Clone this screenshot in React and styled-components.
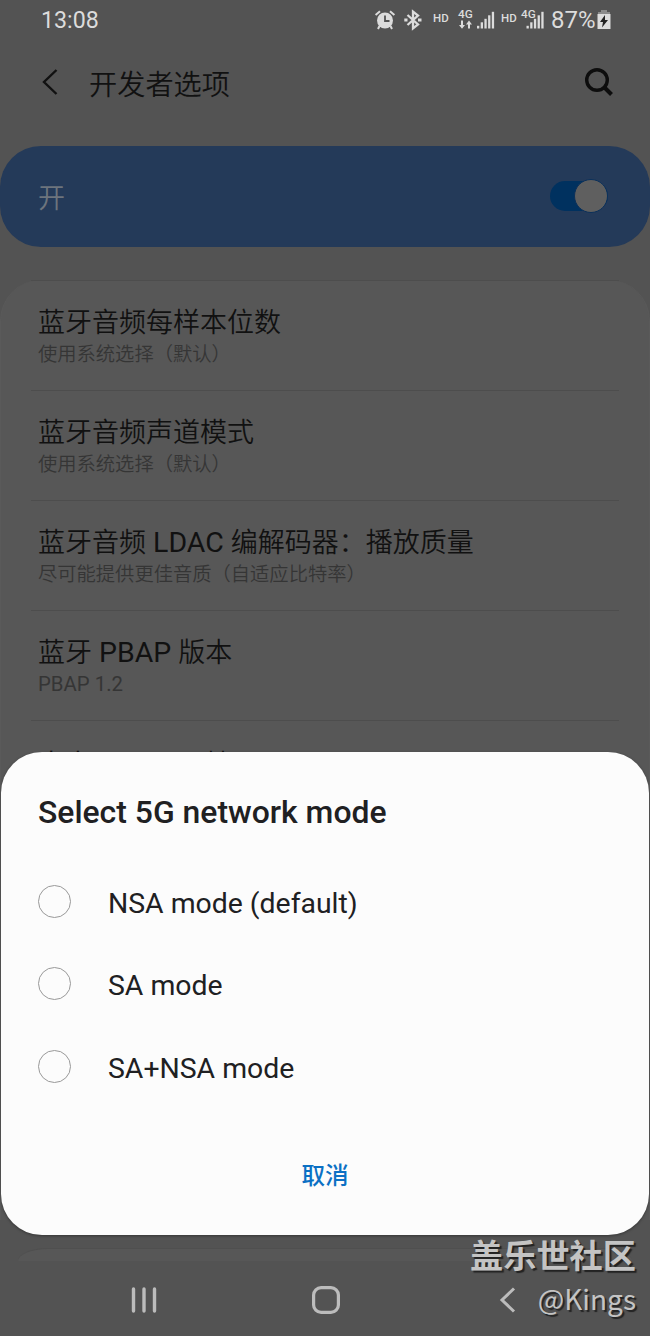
import React from 'react';
import styled, { createGlobalStyle } from 'styled-components';

const Global = createGlobalStyle`
  * { box-sizing: border-box; }
  body { margin: 0; background: #535353; }
`;

const Screen = styled.div`
  position: relative;
  display: flex;
  flex-direction: column;
  width: 650px;
  height: 1336px;
  overflow: hidden;
  background: #535353;
  font-family: Roboto, 'Noto Sans CJK SC', sans-serif;
  color: #111;
`;

const StatusBar = styled.div`
  display: flex;
  flex: none;
  align-items: center;
  justify-content: space-between;
  height: 40px;
  padding: 0 39px 0 41px;
  color: #dcdcdc;
`;

const Clock = styled.span`
  font-size: 23.2px;
  line-height: 40px;
`;

const Indicators = styled.div`
  display: flex;
  align-items: center;
  height: 38px;
  padding-bottom: 1px;
`;

const Battery = styled.span`
  width: 46px;
  margin-left: 5px;
  font-size: 24px;
  line-height: 40px;
  white-space: nowrap;
`;

const HdTag = styled.span`
  width: 17px;
  margin-left: ${p => p.$gap}px;
  font-size: 11.5px;
  font-weight: 500;
  line-height: 36px;
  padding-bottom: 3px;
`;

const Icon = styled.svg`
  flex: none;
  display: block;
  overflow: visible;
  margin-left: ${p => p.$gap || 0}px;
`;

const Header = styled.header`
  display: flex;
  flex: none;
  align-items: center;
  height: 106px;
  padding: 0 36px 22px 40px;
`;

const HeaderTitle = styled.h1`
  flex: 1;
  margin: 0 0 0 29px;
  padding-top: 8px;
  font-size: 28.2px;
  line-height: 40px;
  font-weight: 350;
`;

const MasterSwitch = styled.div`
  display: flex;
  flex: none;
  align-items: center;
  justify-content: space-between;
  height: 101px;
  padding: 0 42px 1px 38px;
  border-radius: 41px;
  background: #243a59;
  color: #6d747d;
  font-size: 27px;
  font-weight: 350;
`;

const Track = styled.div`
  display: flex;
  align-items: center;
  justify-content: flex-end;
  width: 58px;
  height: 30px;
  border-radius: 15px;
  background: #00315f;
`;

const Thumb = styled.div`
  flex: none;
  width: 34px;
  height: 34px;
  border: 1px solid #0b305a;
  border-radius: 50%;
  background: #5f5f5f;
`;

const List = styled.div`
  flex: none;
  height: 940px;
  margin: 33px 0 28px;
  border-radius: 41px 41px 0 0;
  background: #575757;
  border-left: 1px solid #5a5a5a;
  border-right: 1px solid #5a5a5a;
  padding: 0 30px;
`;

const Row = styled.div`
  height: 110px;
  padding: 24px 0 0 7px;
  border-top: 1px solid #4d4d4d;

  &:last-child {
    padding-top: 26px;
  }
`;

const RowTitle = styled.div`
  height: 37px;
  font-size: 27px;
  line-height: 36px;
  font-weight: 350;
  white-space: nowrap;
`;

const RowNote = styled.div`
  height: 26px;
  font-size: 19.3px;
  line-height: 26px;
  font-weight: 350;
  color: #353535;
`;

const Latin = styled.span`
  font-weight: 400;
  font-size: 1.055em;
  line-height: 1;
`;

const NextCard = styled.div`
  flex: none;
  height: 13px;
  margin: 0 18px;
  border-radius: 30px 30px 0 0 / 13px 13px 0 0;
  background: #575757;
  border-top: 1px solid #4f4f4f;
`;

const NavBar = styled.nav`
  display: flex;
  align-items: center;
  flex: 1;
  padding: 2px 0 0 130px;
`;

const Dialog = styled.section`
  position: absolute;
  left: 1px;
  top: 752px;
  width: 648px;
  height: 483px;
  display: flex;
  flex-direction: column;
  padding: 36px 37px 0;
  border-radius: 41px;
  background: #fcfcfc;
  box-shadow: 0 1px 3px rgba(0, 0, 0, 0.35);
  color: #202022;
`;

const DialogTitle = styled.h2`
  margin: 0 0 24px;
  font-size: 31.9px;
  line-height: 48px;
  font-weight: 500;
`;

const Option = styled.label`
  display: flex;
  align-items: center;
  height: 82.5px;
  gap: 37px;
  font-size: 28.4px;
`;

const Radio = styled.span`
  width: 33px;
  height: 33px;
  border: 1.5px solid #999;
  border-radius: 50%;
`;

const OptionText = styled.span`
  padding-top: 4px;
`;

const Cancel = styled.button`
  align-self: center;
  margin-top: 46px;
  padding: 0;
  border: 0;
  background: none;
  color: #0b70c4;
  font: 500 23.6px/40px 'Noto Sans CJK SC', sans-serif;
`;

const Watermark = styled.div`
  position: absolute;
  right: 14px;
  top: 1232px;
  display: flex;
  flex-direction: column;
  align-items: flex-end;
  color: #c4c4c4;
  text-shadow: 2px 2px 1px #222;
  white-space: nowrap;
`;

const Community = styled.div`
  font: 700 33.2px/44px 'Noto Sans CJK SC', sans-serif;
`;

const Author = styled.div`
  font: 400 28px/44px 'Noto Sans CJK SC', sans-serif;
`;

const AlarmIcon = () => (
  <Icon width="20" height="20" viewBox="0 0 20 20" fill="none" stroke="#dcdcdc">
    <circle cx="10" cy="10.5" r="8" fill="#dcdcdc" stroke="none" />
    <path d="M.6 5 5 1.2M19.4 5 15 1.2M4.5 16 3 19M15.5 16 17 19" strokeWidth="2" />
    <path d="M10 5.5V11h4.5" stroke="#535353" strokeWidth="1.8" />
  </Icon>
);

const BluetoothIcon = () => (
  <Icon $gap={9} width="18" height="20" viewBox="0 0 18 20" fill="none" stroke="#dcdcdc" strokeWidth="2.3">
    <path d="M3.5 5 14 14.4 9 18.3V1.7L14 5.6 3.5 15" />
    <path d="M.3 10h3.2M14 10h3.5" strokeWidth="2.8" />
  </Icon>
);

const bars = [0, 1, 2, 3, 4];

const SignalIcon = ({ arrows }) => {
  const start = arrows ? 19 : 5.5;
  return (
    <Icon $gap={arrows ? 8 : 3} width={arrows ? 38 : 25} height="28" viewBox={`0 0 ${arrows ? 38 : 25} 28`} fill="#dcdcdc">
      <text x="0" y="12" fontSize="11.8" fontWeight="500">4G</text>
      {arrows && <path d="M3 14.5h2V19h2l-3 3.8L1 19h2zM10 22.5v-4H8l3-4 3 4h-2v4z" />}
      {bars.map(i => (
        <rect key={i} x={start + i * 3.7} y={19.8 - i * 3.5} width="2.3" height={2.7 + i * 3.5} />
      ))}
    </Icon>
  );
};

const BatteryIcon = () => (
  <Icon width="14" height="20" viewBox="0 0 14 20">
    <path d="M4 0h6v2h3v3H1V2h3z" fill="#8b8b8b" />
    <path d="M.5 4h13v15H.5z" fill="#dcdcdc" />
    <path d="M8 5 3 12h3l-1 5.5 6-7.5H8z" fill="#222" />
  </Icon>
);

const rows = [
  { title: '蓝牙音频每样本位数', note: '使用系统选择（默认）' },
  { title: '蓝牙音频声道模式', note: '使用系统选择（默认）' },
  { title: <>蓝牙音频<Latin> LDAC </Latin>编解码器：播放质量</>, note: '尽可能提供更佳音质（自适应比特率）' },
  { title: <>蓝牙<Latin> PBAP </Latin>版本</>, note: <Latin>PBAP 1.2</Latin> },
  { title: <>自定<Latin> PBAP </Latin>属性</>, note: '' },
];

const options = ['NSA mode (default)', 'SA mode', 'SA+NSA mode'];

export default function App() {
  return (
    <Screen>
      <Global />
      <StatusBar>
        <Clock>13:08</Clock>
        <Indicators>
          <AlarmIcon />
          <BluetoothIcon />
          <HdTag $gap={11}>HD</HdTag>
          <SignalIcon arrows />
          <HdTag $gap={5}>HD</HdTag>
          <SignalIcon />
          <Battery>87%</Battery>
          <BatteryIcon />
        </Indicators>
      </StatusBar>
      <Header>
        <Icon width="20" height="28" viewBox="0 0 20 28" fill="none" stroke="#111" strokeWidth="2.4">
          <path d="M16.5 2 4 14l12.5 12" />
        </Icon>
        <HeaderTitle>开发者选项</HeaderTitle>
        <Icon width="30" height="30" viewBox="0 0 30 30" fill="none" stroke="#0d0d0d" strokeWidth="3.4">
          <circle cx="13" cy="13" r="10.3" />
          <path d="m20 20 7.5 7.5" strokeWidth="4" />
        </Icon>
      </Header>
      <MasterSwitch>
        开
        <Track><Thumb /></Track>
      </MasterSwitch>
      <List>
        {rows.map((r, i) => (
          <Row key={i}>
            <RowTitle>{r.title}</RowTitle>
            <RowNote>{r.note}</RowNote>
          </Row>
        ))}
      </List>
      <NextCard />
      <NavBar>
        <Icon width="28" height="28" viewBox="0 0 28 28" stroke="#bcbcbc" strokeWidth="3.4" strokeLinecap="round">
          <path d="M3.5 3v22M14 3v22M24.5 3v22" />
        </Icon>
        <Icon $gap={154} width="28" height="28" viewBox="0 0 28 28" fill="none" stroke="#bcbcbc" strokeWidth="3.2">
          <rect x="1.6" y="1.6" width="24.8" height="24.8" rx="7.5" />
        </Icon>
        <Icon $gap={159} width="18" height="28" viewBox="0 0 18 28" fill="none" stroke="#bcbcbc" strokeWidth="3">
          <path d="M15 2.5 3 14l12 11.5" />
        </Icon>
      </NavBar>
      <Dialog>
        <DialogTitle>Select 5G network mode</DialogTitle>
        {options.map(o => (
          <Option key={o}>
            <Radio />
            <OptionText>{o}</OptionText>
          </Option>
        ))}
        <Cancel>取消</Cancel>
      </Dialog>
      <Watermark>
        <Community>盖乐世社区</Community>
        <Author>@Kings</Author>
      </Watermark>
    </Screen>
  );
}
